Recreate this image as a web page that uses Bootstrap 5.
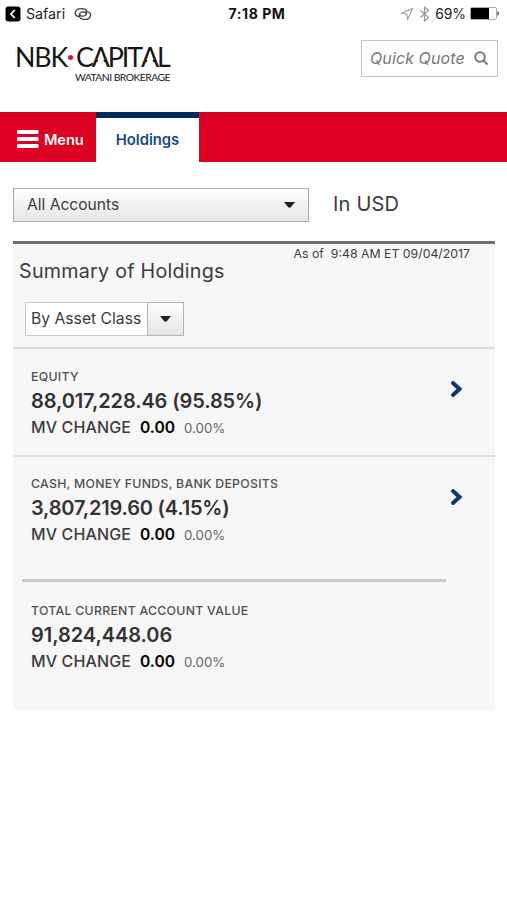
<!DOCTYPE html>
<html lang="en">
<head>
<meta charset="utf-8">
<meta name="viewport" content="width=device-width, initial-scale=1">
<title>Holdings</title>
<link href="https://cdn.jsdelivr.net/npm/bootstrap@5.3.0/dist/css/bootstrap.min.css" rel="stylesheet">
<style>
body{font-family:Inter,"Liberation Sans",sans-serif;color:#3c3c3c;background:#fff;min-height:900px;overflow:hidden;white-space:nowrap}
svg{display:block;flex:none}
.status{height:27px;padding:0 7px 0 5px;font-size:14px;color:#222;line-height:27px}
.status .side{width:200px}
.safari{font-size:14.3px;letter-spacing:-.05px;margin-left:5px;margin-right:9px}
.clock{font-size:14px;letter-spacing:.55px;padding-left:9px;color:#111}
.pct{font-size:14px;letter-spacing:-.1px}
.site-head{height:85px;padding:13px 9px 0 15px}
.logo{width:156px;font-family:Lato,sans-serif;color:#161616}
.logo-main{font-size:26.8px;line-height:32px;height:32px;margin-top:1px}
.nbk{letter-spacing:-1.2px;width:53px}
.capital{letter-spacing:-2.1px}
.dot{width:5px;height:5px;flex:none;background:#dc1431;margin-right:3px}
.open-a{display:inline-block;position:relative}
.open-a::after{content:"";position:absolute;left:4.8px;top:11px;width:8.4px;height:13px;background:#fff;clip-path:polygon(50% 0,100% 100%,0 100%)}
.logo-sub{font-size:10.4px;line-height:12px;letter-spacing:-.55px;margin-top:-2px;padding-right:1px}
.quote{width:137px;height:37px;border:1px solid #c4c4c4;padding:0 8px 2px;color:#777;font-size:16px;letter-spacing:.1px}
.main-nav{height:50px;background:#dc0022;font-size:15px;font-weight:600;color:#fff;border-top:1px solid #c10b2b}
.menu{width:96px;padding-left:17px;padding-top:4px;gap:5px}
.menu-name{font-size:14.6px;letter-spacing:-.1px;padding-top:2px}
.tab-name{font-size:14.8px}
.tab-on{width:103px;height:51px;margin-top:-1px;background:#fff;border-top:6px solid #002a5c;color:#174a83}
.filters{padding:26px 13px 0}
.grad{background:linear-gradient(#fdfdfd,#e6e6e6)}
.account{width:296px;height:34px;border:1px solid #ababab;padding:0 13px 0 13px;font-size:15.6px}
.usd{font-size:20px;margin-left:24px;line-height:33px;letter-spacing:.2px}
.panel{margin:19px 12px 0 13px;height:469px;background:#f7f7f7;border-top:3px solid #717171}
.panel-head{height:105px;border-bottom:2px solid #dcdcdc;padding:0 12px 0 6px}
.asof{font-size:12.3px;line-height:19px;height:16px;margin-right:13px}
.ttl{font-size:19.7px;line-height:23px;height:24px;letter-spacing:.25px}
.by{margin:18px 0 0 6px;width:159px;height:34px;font-size:15.7px}
.by-name{width:122px;border:1px solid #c9c9c9;border-right:0;background:#fff;padding-left:5px}
.by-btn{width:37px;border:1px solid #b4b4b4}
.item{height:108px;border-bottom:2px solid #dcdcdc;padding:19px 32px 0 18px}
.item.last{border:0;height:122px;padding-top:18px}
.cap{font-size:12.3px;font-weight:500;line-height:18px;letter-spacing:.3px;color:#505050}
.c2,.c3{letter-spacing:.27px}
.val{font-size:20px;font-weight:600;line-height:30px;color:#333}
.v1{letter-spacing:-.12px}
.v2{letter-spacing:-.2px}
.v3{letter-spacing:-.05px}
.chg{font-size:16px;font-weight:500;line-height:23px}
.chg-name{letter-spacing:.12px}
.chg b{color:#000;font-weight:600;margin-left:9px;font-size:15.6px}
.chg i{font-style:normal;font-weight:400;font-size:13.3px;color:#666;margin-left:9px}
.arrow{margin-top:11px}
.last .arrow{margin-top:12px}
.sum-line{height:3px;background:#c9c9c9;margin:0 49px 0 9px}
.total{padding:20px 0 0 18px}
</style>
</head>
<body>
<div class="status d-flex justify-content-between align-items-center">
  <div class="side d-flex align-items-center">
    <svg width="16" height="16" viewBox="0 0 16 16"><rect x=".5" y=".5" width="15" height="15" rx="3" fill="#000"/><path d="M9.800 4 6 8l3.800 4" fill="none" stroke="#fff" stroke-width="1.800"/></svg>
    <span class="safari">Safari</span>
    <svg width="18" height="14" viewBox="0 0 18 14" fill="none" stroke="#444" stroke-width="1.300" stroke-linecap="round"><path d="M5 9.700C2.500 9.200 1 7.700 1.200 5.700 1.500 3.300 4 1.600 7 1.600c3.200 0 5.600 1.500 5.600 3.800 0 2.200-2 3.700-4.200 3.800-1.400 0-2.400-.6-2.400-1.500"/><path d="M12.800 4.300c2.500.5 4 2 3.800 4-.3 2.400-2.800 4.100-5.800 4.100-3.200 0-5.600-1.500-5.600-3.800 0-2.200 2-3.700 4.200-3.800 1.400 0 2.400.6 2.400 1.500"/></svg>
  </div>
  <div class="clock fw-bold">7:18 PM</div>
  <div class="side d-flex align-items-center justify-content-end">
    <svg width="14" height="14" viewBox="0 0 14 14" fill="none" stroke="#999" stroke-width="1.100"><path d="M12.500 1.500 1.500 6.300 6.700 7.300 7.700 12.300Z"/></svg>
    <svg class="ms-1 me-1" width="13" height="16" viewBox="0 0 13 16" fill="none" stroke="#999" stroke-width="1.200"><path d="m2.500 4.500 8 7L6.500 15V1l4 3.500-8 7"/></svg>
    <span class="pct">69%</span>
    <svg class="ms-1" width="30" height="13" viewBox="0 0 30 13"><rect x=".5" y=".5" width="26" height="12" rx="1.500" fill="#fff" stroke="#aaa"/><path d="M1 1h18v11H1z"/><path d="M27.500 4q3 2.500 0 5z" fill="#333"/></svg>
  </div>
</div>
<header class="site-head d-flex justify-content-between">
  <div class="logo">
    <div class="logo-main d-flex align-items-center"><span class="nbk">NBK</span><span class="dot rounded-circle"></span><span class="capital">C<span class="open-a">A</span>PIT<span class="open-a">A</span>L</span></div>
    <div class="logo-sub text-end">WATANI BROKERAGE</div>
  </div>
  <div class="quote d-flex align-items-center justify-content-between"><em>Quick Quote</em>
    <svg width="16" height="16" viewBox="0 0 16 16" fill="none" stroke="#777" stroke-width="2"><circle cx="7" cy="7" r="4.800"/><path d="m10.500 10.500 4 4"/></svg>
  </div>
</header>
<nav class="main-nav d-flex">
  <div class="menu d-flex align-items-center">
    <svg width="22" height="19" viewBox="0 0 22 19" fill="#fff"><rect y="0" width="21.500" height="4" rx="1"/><rect y="7" width="21.500" height="4" rx="1"/><rect y="14" width="21.500" height="4" rx="1"/></svg>
    <span class="menu-name">Menu</span>
  </div>
  <div class="tab-on d-flex align-items-center justify-content-center"><span class="tab-name">Holdings</span></div>
</nav>
<div class="filters d-flex">
  <div class="account grad d-flex align-items-center justify-content-between"><span>All Accounts</span>
    <svg width="11" height="6" viewBox="0 0 11 6"><path d="M0 0h11L7 5q-1.500 1.500-3 0z" fill="#222"/></svg></div>
  <div class="usd">In USD</div>
</div>
<main class="panel">
  <div class="panel-head">
    <div class="asof text-end">As of &nbsp;9:48 AM ET 09/04/2017</div>
    <div class="ttl">Summary of Holdings</div>
    <div class="by d-flex">
      <div class="by-name d-flex align-items-center">By Asset Class</div>
      <div class="by-btn grad d-flex align-items-center justify-content-center"><svg width="11" height="6" viewBox="0 0 11 6"><path d="M0 0h11L7 5q-1.500 1.500-3 0z" fill="#222"/></svg></div>
    </div>
  </div>
  <div class="item d-flex justify-content-between">
    <div><div class="cap"><span class="c1">EQUITY</span></div><div class="val"><span class="v1">88,017,228.46 (95.85%)</span></div><div class="chg"><span class="chg-name">MV CHANGE</span><b>0.00</b><i>0.00%</i></div></div>
    <svg class="arrow" width="14" height="20" viewBox="0 0 14 20" fill="none" stroke="#063a78" stroke-width="4" stroke-linecap="round"><path d="m4 4 6.500 6L4 16"/></svg>
  </div>
  <div class="item last d-flex justify-content-between">
    <div><div class="cap"><span class="c2">CASH, MONEY FUNDS, BANK DEPOSITS</span></div><div class="val"><span class="v2">3,807,219.60 (4.15%)</span></div><div class="chg"><span class="chg-name">MV CHANGE</span><b>0.00</b><i>0.00%</i></div></div>
    <svg class="arrow" width="14" height="20" viewBox="0 0 14 20" fill="none" stroke="#063a78" stroke-width="4" stroke-linecap="round"><path d="m4 4 6.500 6L4 16"/></svg>
  </div>
  <div class="sum-line"></div>
  <div class="total"><div class="cap"><span class="c3">TOTAL CURRENT ACCOUNT VALUE</span></div><div class="val"><span class="v3">91,824,448.06</span></div><div class="chg"><span class="chg-name">MV CHANGE</span><b>0.00</b><i>0.00%</i></div></div>
</main>
<script src="https://cdn.jsdelivr.net/npm/bootstrap@5.3.0/dist/js/bootstrap.bundle.min.js"></script>
</body>
</html>
